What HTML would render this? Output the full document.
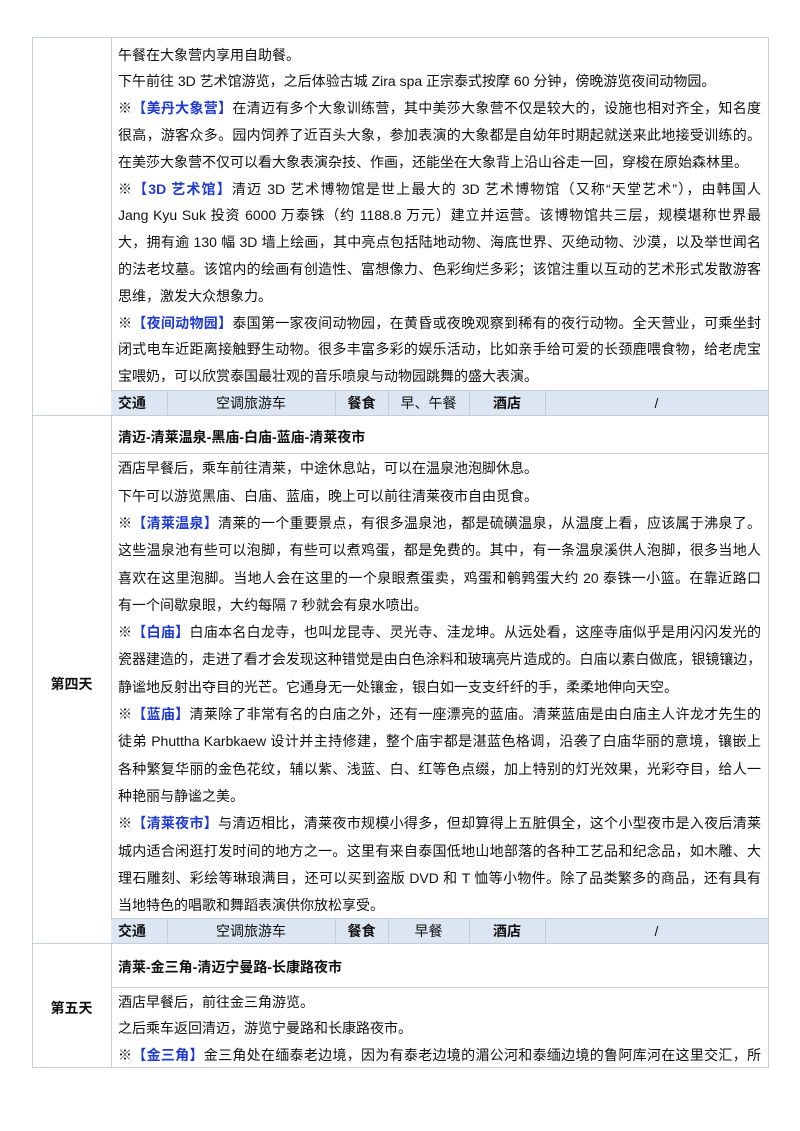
<!DOCTYPE html>
<html><head><meta charset="utf-8"><style>
*{margin:0;padding:0;box-sizing:border-box}
body{width:800px;height:1131px;background:#fff;position:relative;overflow:hidden;font-family:"Liberation Sans","Noto Sans CJK SC",sans-serif;color:#111;font-size:14px}
.h{position:absolute;height:1px;background:#c8ccd4}
.v{position:absolute;width:1px;background:#c8ccd4}
.sec{position:absolute;left:118px;width:643px}
.sec div{white-space:nowrap;overflow:visible}
.s1 div{height:26.8px;line-height:26.8px}
.s2 div{height:27.3px;line-height:27.3px}
.s3 div{height:26.5px;line-height:26.5px}
.j{text-align:justify;text-align-last:justify}
b.bl{color:#1f3ad0}
.tr{position:absolute;left:111px;width:657px;height:24px;background:#dce6f2}
.tc{position:absolute;top:0;height:24px;line-height:24px;font-size:14px}
.t{position:absolute;left:118px;font-weight:bold;font-size:14px}
.day{position:absolute;left:32px;width:79px;text-align:center;font-weight:bold;font-size:14px}
</style></head><body>
<div class="h" style="left:32px;top:37px;width:737px"></div>
<div class="v" style="left:32px;top:37px;height:1031px"></div>
<div class="v" style="left:111px;top:37px;height:1031px"></div>
<div class="v" style="left:768px;top:37px;height:1031px"></div>
<div class="h" style="left:32px;top:1067px;width:737px"></div>

<div class="sec s1" style="top:41.6px">
<div>午餐在大象营内享用自助餐。</div>
<div>下午前往 3D 艺术馆游览，之后体验古城 Zira spa 正宗泰式按摩 60 分钟，傍晚游览夜间动物园。</div>
<div class="j">※<b class="bl">【美丹大象营】</b>在清迈有多个大象训练营，其中美莎大象营不仅是较大的，设施也相对齐全，知名度</div>
<div class="j">很高，游客众多。园内饲养了近百头大象，参加表演的大象都是自幼年时期起就送来此地接受训练的。</div>
<div>在美莎大象营不仅可以看大象表演杂技、作画，还能坐在大象背上沿山谷走一回，穿梭在原始森林里。</div>
<div class="j">※<b class="bl">【3D 艺术馆】</b>清迈 3D 艺术博物馆是世上最大的 3D 艺术博物馆（又称“天堂艺术”），由韩国人</div>
<div class="j">Jang Kyu Suk 投资 6000 万泰铢（约 1188.8 万元）建立并运营。该博物馆共三层，规模堪称世界最</div>
<div class="j">大，拥有逾 130 幅 3D 墙上绘画，其中亮点包括陆地动物、海底世界、灭绝动物、沙漠，以及举世闻名</div>
<div class="j">的法老坟墓。该馆内的绘画有创造性、富想像力、色彩绚烂多彩；该馆注重以互动的艺术形式发散游客</div>
<div>思维，激发大众想象力。</div>
<div class="j">※<b class="bl">【夜间动物园】</b>泰国第一家夜间动物园，在黄昏或夜晚观察到稀有的夜行动物。全天营业，可乘坐封</div>
<div class="j">闭式电车近距离接触野生动物。很多丰富多彩的娱乐活动，比如亲手给可爱的长颈鹿喂食物，给老虎宝</div>
<div>宝喂奶，可以欣赏泰国最壮观的音乐喷泉与动物园跳舞的盛大表演。</div>
</div>

<div class="h" style="left:111px;top:390px;width:658px"></div>
<div class="tr" style="top:391px">
<div class="tc" style="left:7px;font-weight:bold">交通</div>
<div class="tc" style="left:56px;width:168px;text-align:center">空调旅游车</div>
<div class="tc" style="left:224px;width:53px;text-align:center;font-weight:bold">餐食</div>
<div class="tc" style="left:277px;width:81px;text-align:center">早、午餐</div>
<div class="tc" style="left:358px;width:76px;text-align:center;font-weight:bold">酒店</div>
<div class="tc" style="left:434px;width:223px;text-align:center">/</div>
<div class="v" style="left:56px;top:0;height:24px"></div>
<div class="v" style="left:224px;top:0;height:24px"></div>
<div class="v" style="left:277px;top:0;height:24px"></div>
<div class="v" style="left:358px;top:0;height:24px"></div>
<div class="v" style="left:434px;top:0;height:24px"></div>
</div>
<div class="h" style="left:32px;top:415px;width:737px"></div>

<div class="t" style="top:427px">清迈-清莱温泉-黑庙-白庙-蓝庙-清莱夜市</div>
<div class="h" style="left:111px;top:453px;width:658px"></div>
<div class="day" style="top:674px">第四天</div>
<div class="sec s2" style="top:455.4px">
<div>酒店早餐后，乘车前往清莱，中途休息站，可以在温泉池泡脚休息。</div>
<div>下午可以游览黑庙、白庙、蓝庙，晚上可以前往清莱夜市自由觅食。</div>
<div class="j">※<b class="bl">【清莱温泉】</b>清莱的一个重要景点，有很多温泉池，都是硫磺温泉，从温度上看，应该属于沸泉了。</div>
<div class="j">这些温泉池有些可以泡脚，有些可以煮鸡蛋，都是免费的。其中，有一条温泉溪供人泡脚，很多当地人</div>
<div class="j">喜欢在这里泡脚。当地人会在这里的一个泉眼煮蛋卖，鸡蛋和鹌鹑蛋大约 20 泰铢一小篮。在靠近路口</div>
<div>有一个间歇泉眼，大约每隔 7 秒就会有泉水喷出。</div>
<div class="j">※<b class="bl">【白庙】</b>白庙本名白龙寺，也叫龙昆寺、灵光寺、洼龙坤。从远处看，这座寺庙似乎是用闪闪发光的</div>
<div class="j" style="letter-spacing:-0.3px">瓷器建造的，走进了看才会发现这种错觉是由白色涂料和玻璃亮片造成的。白庙以素白做底，银镜镶边，</div>
<div>静谧地反射出夺目的光芒。它通身无一处镶金，银白如一支支纤纤的手，柔柔地伸向天空。</div>
<div class="j">※<b class="bl">【蓝庙】</b>清莱除了非常有名的白庙之外，还有一座漂亮的蓝庙。清莱蓝庙是由白庙主人许龙才先生的</div>
<div class="j">徒弟 Phuttha Karbkaew 设计并主持修建，整个庙宇都是湛蓝色格调，沿袭了白庙华丽的意境，镶嵌上</div>
<div class="j">各种繁复华丽的金色花纹，辅以紫、浅蓝、白、红等色点缀，加上特别的灯光效果，光彩夺目，给人一</div>
<div>种艳丽与静谧之美。</div>
<div class="j">※<b class="bl">【清莱夜市】</b>与清迈相比，清莱夜市规模小得多，但却算得上五脏俱全，这个小型夜市是入夜后清莱</div>
<div class="j">城内适合闲逛打发时间的地方之一。这里有来自泰国低地山地部落的各种工艺品和纪念品，如木雕、大</div>
<div class="j">理石雕刻、彩绘等琳琅满目，还可以买到盗版 DVD 和 T 恤等小物件。除了品类繁多的商品，还有具有</div>
<div>当地特色的唱歌和舞蹈表演供你放松享受。</div>
</div>

<div class="h" style="left:111px;top:918px;width:658px"></div>
<div class="tr" style="top:919px">
<div class="tc" style="left:7px;font-weight:bold">交通</div>
<div class="tc" style="left:56px;width:168px;text-align:center">空调旅游车</div>
<div class="tc" style="left:224px;width:53px;text-align:center;font-weight:bold">餐食</div>
<div class="tc" style="left:277px;width:81px;text-align:center">早餐</div>
<div class="tc" style="left:358px;width:76px;text-align:center;font-weight:bold">酒店</div>
<div class="tc" style="left:434px;width:223px;text-align:center">/</div>
<div class="v" style="left:56px;top:0;height:24px"></div>
<div class="v" style="left:224px;top:0;height:24px"></div>
<div class="v" style="left:277px;top:0;height:24px"></div>
<div class="v" style="left:358px;top:0;height:24px"></div>
<div class="v" style="left:434px;top:0;height:24px"></div>
</div>
<div class="h" style="left:32px;top:943px;width:737px"></div>

<div class="t" style="top:957px">清莱-金三角-清迈宁曼路-长康路夜市</div>
<div class="h" style="left:111px;top:987px;width:658px"></div>
<div class="day" style="top:998px">第五天</div>
<div class="sec s3" style="top:988.7px">
<div>酒店早餐后，前往金三角游览。</div>
<div>之后乘车返回清迈，游览宁曼路和长康路夜市。</div>
<div class="j">※<b class="bl">【金三角】</b>金三角处在缅泰老边境，因为有泰老边境的湄公河和泰缅边境的鲁阿库河在这里交汇，所</div>
</div>
</body></html>
